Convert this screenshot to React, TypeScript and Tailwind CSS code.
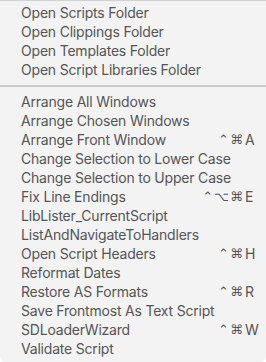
import React from "react";

type Item = { label: string; mods?: string; key?: string };

const top: Item[] = [
  { label: "Open Scripts Folder" },
  { label: "Open Clippings Folder" },
  { label: "Open Templates Folder" },
  { label: "Open Script Libraries Folder" },
];

const bottom: Item[] = [
  { label: "Arrange All Windows" },
  { label: "Arrange Chosen Windows" },
  { label: "Arrange Front Window", mods: "⌃⌘", key: "A" },
  { label: "Change Selection to Lower Case" },
  { label: "Change Selection to Upper Case" },
  { label: "Fix Line Endings", mods: "⌃⌥⌘", key: "E" },
  { label: "LibLister_CurrentScript" },
  { label: "ListAndNavigateToHandlers" },
  { label: "Open Script Headers", mods: "⌃⌘", key: "H" },
  { label: "Reformat Dates" },
  { label: "Restore AS Formats", mods: "⌃⌘", key: "R" },
  { label: "Save Frontmost As Text Script" },
  { label: "SDLoaderWizard", mods: "⌃⌘", key: "W" },
  { label: "Validate Script" },
];

function Row({ item }: { item: Item }) {
  return (
    <div className="flex h-[19px] items-center pl-[21px] leading-[19px] whitespace-nowrap">
      <span className="flex-1 min-w-0 tracking-[-0.2px]">{item.label}</span>
      {item.mods && (
        <>
          <span className="w-[50px] text-right text-[13px] font-['DejaVu_Sans',sans-serif] tracking-[1px]">
            {item.mods}
          </span>
          <span className="w-[22px] pl-[1px]">{item.key}</span>
        </>
      )}
    </div>
  );
}

export default function App() {
  return (
    <div className="w-[266px] h-[362px] bg-white">
      <div className="h-[362px] bg-[#f3f3f3] border-t border-[#d2d2d2] rounded-b-[6px] pt-[2px] text-[14px] text-[#555555] font-['Inter','DejaVu_Sans',sans-serif]">
        {top.map((it) => (
          <Row key={it.label} item={it} />
        ))}
        <div className="pt-[6px] pb-[5px]">
          <div className="h-[2px] bg-[#cacaca]" />
        </div>
        {bottom.map((it) => (
          <Row key={it.label} item={it} />
        ))}
      </div>
    </div>
  );
}
